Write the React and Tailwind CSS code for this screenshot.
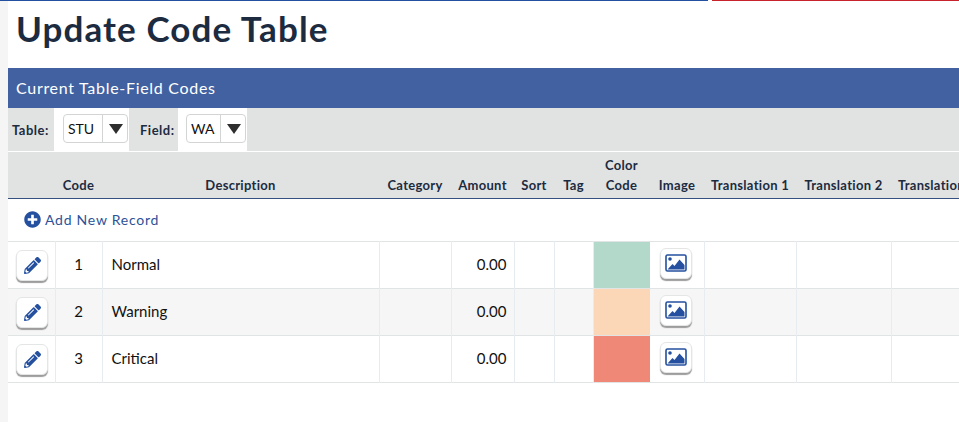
import { FaPencilAlt, FaPlusCircle } from 'react-icons/fa'

const COLUMNS = [
  { label: 'Code', width: 47 },
  { label: 'Description', width: 277 },
  { label: 'Category', width: 72 },
  { label: 'Amount', width: 63 },
  { label: 'Sort', width: 40 },
  { label: 'Tag', width: 39 },
  { label: 'Color Code', width: 57 },
  { label: 'Image', width: 54 },
  { label: 'Translation 1', width: 92 },
  { label: 'Translation 2', width: 95 },
  { label: 'Translation 3', width: 92 },
]

const ROWS = [
  { code: 1, name: 'Normal', color: 'bg-[#b2d9c9]', stripe: false },
  { code: 2, name: 'Warning', color: 'bg-[#fbd7b7]', stripe: true },
  { code: 3, name: 'Critical', color: 'bg-[#ef8876]', stripe: false },
]

function IconButton({ children, className = '' }) {
  return (
    <button className={`flex h-[31px] w-[32px] items-center justify-center rounded-[6px] border border-[#e4e6e6] bg-white text-[#24509f] shadow-[0_2px_1px_#9c9c9c] ${className}`}>
      {children}
    </button>
  )
}

function ImageIcon() {
  return (
    <svg className="h-[18px] w-[22px]" viewBox="0 0 22 18">
      <rect x="1" y="1" width="20" height="16" rx="1.5" fill="none" stroke="#24509f" strokeWidth="1.6" />
      <circle cx="5" cy="5" r="1.8" fill="#24509f" />
      <path d="M2.5 15.5 7.5 10l2 2 5-6.5 5 5.5v4.5z" fill="#24509f" />
    </svg>
  )
}

function Select({ value, width, split }) {
  return (
    <div className={`flex h-[29px] items-center rounded-[4px] border border-[#d3d5d5] bg-white font-normal tracking-normal ${width}`}>
      <span className={`h-full border-r border-[#d3d5d5] pl-[4px] text-[14px] leading-[27px] text-[#111] ${split}`}>{value}</span>
      <svg className="ml-[6px] h-[10px] w-[14px]" viewBox="0 0 14 10">
        <path d="M0 0h14L7 10z" fill="#2e2e2e" />
      </svg>
    </div>
  )
}

export default function App() {
  return (
    <div className="h-[422px] w-[959px] overflow-hidden bg-[#f5f5f5] pl-[8px] font-['Lato','Noto_Sans',sans-serif]">
      <div className="h-full bg-white">
        <div className="-ml-[8px] flex h-[1px]">
          <div className="w-[708px] bg-[#24509f]" />
          <div className="w-[4px] bg-white" />
          <div className="flex-1 bg-[#c8232c]" />
        </div>
        <h1 className="h-[67px] pl-[8px] pt-[4px] text-[35px] leading-[46px] font-bold tracking-[1.1px] text-[#1c2b3f]">Update Code Table</h1>
        <div className="flex h-[40px] items-center bg-[#4161a1] pl-[8px] text-[16px] tracking-[0.7px] text-white">Current Table-Field Codes</div>

        <div className="flex h-[44px] border-b border-white bg-[#e1e3e3] text-[13px] font-bold tracking-[0.5px] text-[#1c2b3f]">
          <div className="flex w-[46px] items-center pl-[4px] pt-[2px]">Table:</div>
          <div className="flex w-[75px] bg-white pl-[9px] pt-[6px]">
            <Select value="STU" width="w-[65px]" split="w-[39px]" />
          </div>
          <div className="flex w-[49px] items-center pl-[11px] pt-[2px]">Field:</div>
          <div className="flex w-[69px] bg-white pl-[8px] pt-[6px]">
            <Select value="WA" width="w-[60px]" split="w-[34px]" />
          </div>
        </div>

        <table className="w-[975px] table-fixed border-collapse text-[15px] text-[#111]">
          <colgroup>
            <col className="w-[47px]" />
            {COLUMNS.map((c) => (
              <col key={c.label} style={{ width: c.width }} />
            ))}
          </colgroup>
          <thead>
            <tr className="h-[46px] border-b border-[#34507f] bg-[#e1e3e3] text-[13px] font-bold tracking-[0.3px] text-[#1c2b3f]">
              <th />
              {COLUMNS.map((c) => (
                <th key={c.label} className="px-0 pb-[3px] align-bottom leading-[20px] font-bold">
                  {c.label === 'Color Code' ? c.label : <span className="whitespace-nowrap">{c.label}</span>}
                </th>
              ))}
            </tr>
          </thead>
          <tbody>
            <tr className="h-[43px] border-b border-[#e1e4e4]">
              <td colSpan={12} className="pl-[16px]">
                <div className="flex items-center gap-[4px] text-[14px] tracking-[0.75px] text-[#2c5299]">
                  <FaPlusCircle className="h-[17px] w-[17px] text-[#24509f]" />
                  Add New Record
                </div>
              </td>
            </tr>
            {ROWS.map((r) => (
              <tr key={r.code} className={`h-[47px] border-b border-[#e1e4e4] ${r.stripe ? 'bg-[#f6f6f6]' : 'bg-white'}`}>
                <td className="border-r border-[#e6ecef] pl-[8px]">
                  <IconButton className="mt-[1px]">
                    <FaPencilAlt className="h-[17px] w-[17px]" />
                  </IconButton>
                </td>
                <td className="border-r border-[#e6ecef] text-center">{r.code}</td>
                <td className="border-r border-[#e6ecef] pl-[9px]">{r.name}</td>
                <td className="border-r border-[#e6ecef]" />
                <td className="border-r border-[#e6ecef] pr-[7px] text-right">0.00</td>
                <td className="border-r border-[#e6ecef]" />
                <td className="border-r border-[#e6ecef]" />
                <td className={r.color} />
                <td className="border-r border-[#e6ecef] pl-[10px]">
                  <IconButton className="mb-[3px]">
                    <ImageIcon />
                  </IconButton>
                </td>
                <td className="border-r border-[#e6ecef]" />
                <td className="border-r border-[#e6ecef]" />
                <td />
              </tr>
            ))}
          </tbody>
        </table>
      </div>
    </div>
  )
}
